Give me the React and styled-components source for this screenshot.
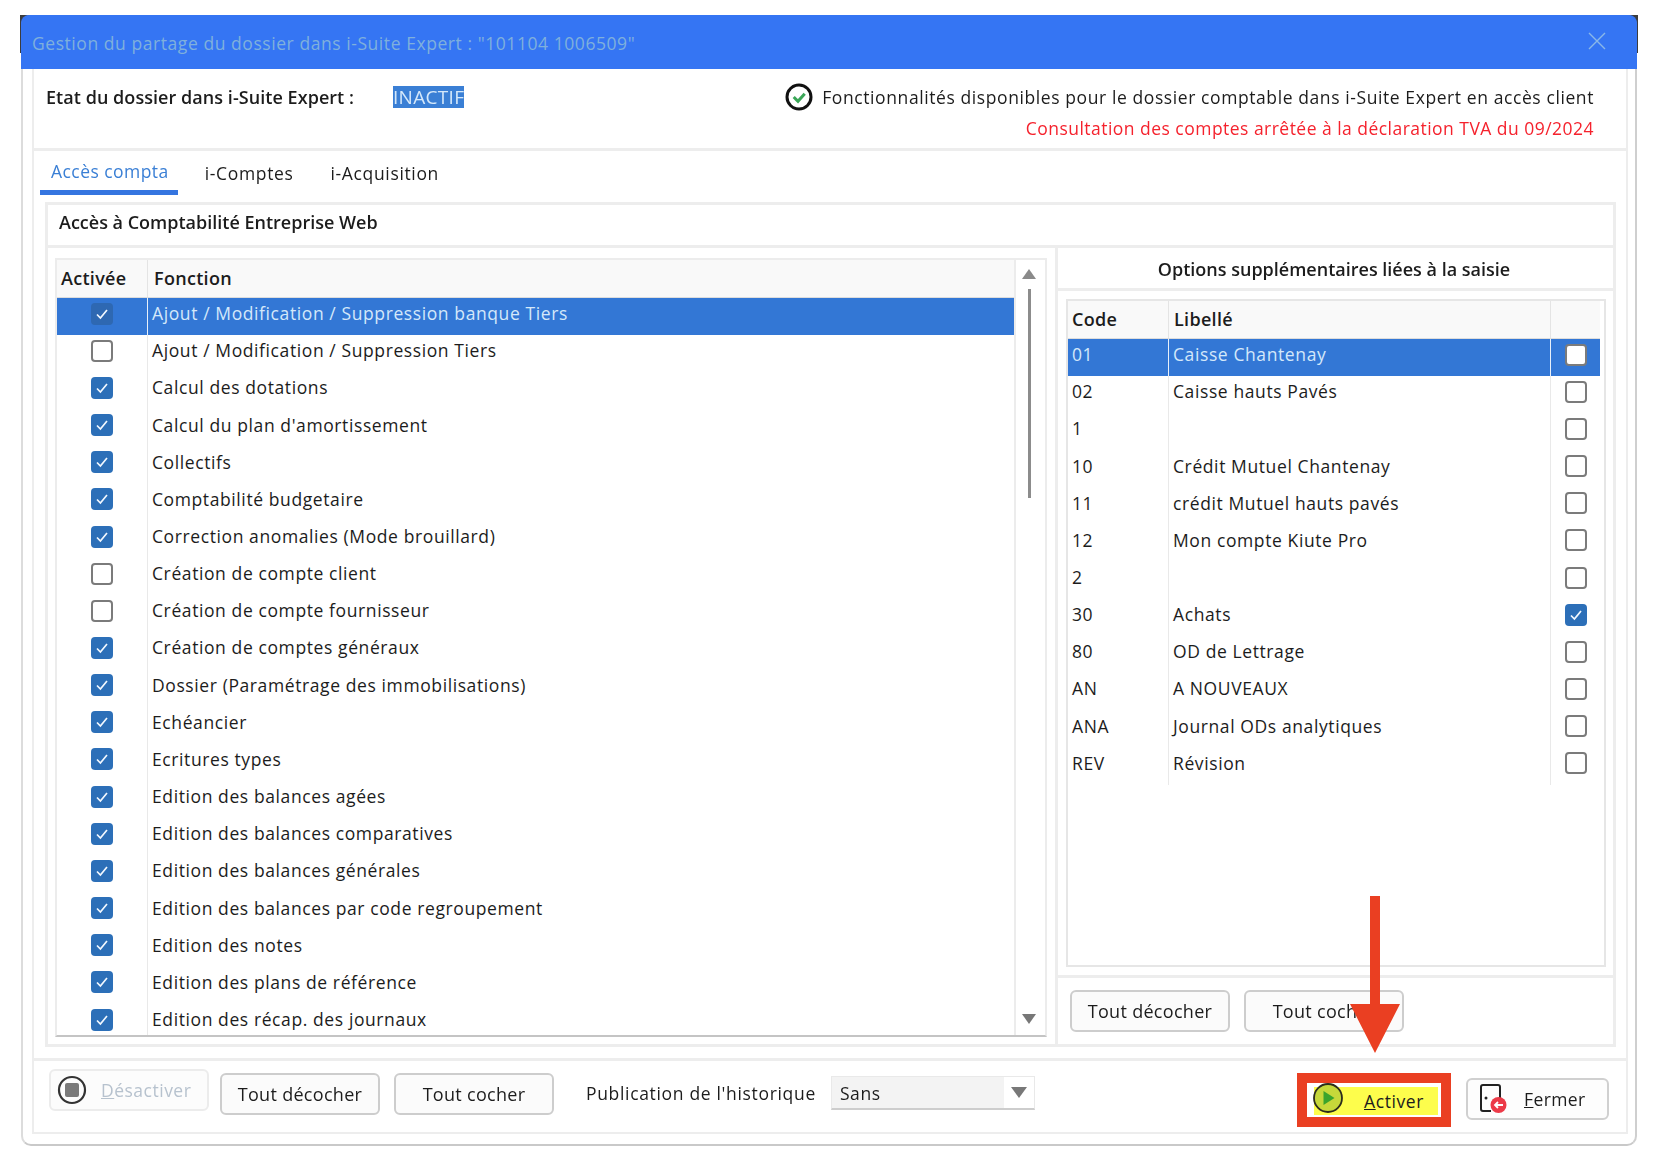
import React from "react";
import styled, { createGlobalStyle } from "styled-components";

const Global = createGlobalStyle`
  html, body { margin: 0; padding: 0; background: #fff; }
  body { font-family: "Open Sans", "Noto Sans", "Liberation Sans", sans-serif; color: #1c1c1c; }
  * { box-sizing: border-box; }
`;

const Page = styled.div`
  width: 1658px;
  height: 1164px;
  padding: 15px 21px 18px;
  overflow: hidden;
  filter: blur(0.3px);
`;

const Window = styled.div`
  position: relative;
  width: 1616px;
  height: 1131px;
  display: flex;
  flex-direction: column;
  border-left: 2px solid #dcdcdc;
  border-right: 2px solid #cfcfcf;
  border-bottom: 2px solid #c9c9c9;
  border-radius: 10px;
`;

const TitleBar = styled.div`
  flex: 0 0 54px;
  margin: 0 -2px;
  padding: 0 12px 0 11px;
  background: #3575f3;
  border-radius: 8px 8px 0 0;
  display: flex;
  align-items: center;
  justify-content: space-between;
`;

const TitleText = styled.span`
  font-size: 17.5px;
  letter-spacing: 0.56px;
  color: #7fb0dc;
  padding-top: 2px;
`;

const CloseIcon = styled.svg`
  width: 22px;
  height: 22px;
  margin-right: 17px;
  margin-top: -3px;
`;

const Inner = styled.div`
  flex: 1;
  min-height: 0;
  margin: 0 7px 10px 9px;
  display: flex;
  flex-direction: column;
  border-left: 2px solid #ededed;
  border-right: 2px solid #ededed;
  border-bottom: 2px solid #ededed;
`;

const StatusBar = styled.div`
  flex: 0 0 82px;
  border-bottom: 3px solid #ededed;
  display: flex;
  justify-content: space-between;
  padding: 14px 32px 0 12px;
`;

const StatusLeft = styled.div`
  display: flex;
  align-items: center;
  height: 28px;
`;

const StatusLabel = styled.span`
  font-size: 18px;
  font-weight: 600;
  width: 347px;
  letter-spacing: 0.05px;
`;

const SelectedWord = styled.span`
  background: #3a7fd5;
  color: #d4e8fa;
  font-size: 19px;
  line-height: 22px;
  letter-spacing: 0.3px;
`;

const StatusRight = styled.div`
  display: flex;
  flex-direction: column;
  align-items: flex-end;
`;

const StatusLine = styled.div`
  display: flex;
  align-items: center;
  gap: 9px;
  height: 28px;
  font-size: 17.5px;
  letter-spacing: 0.59px;
`;

const RedLine = styled(StatusLine)`
  color: #f5222d;
  margin-top: 3px;
  letter-spacing: 0.47px;
`;

const Tabs = styled.div`
  flex: 0 0 51px;
  display: flex;
  padding-left: 6px;
  align-items: flex-start;
`;

const Tab = styled.div`
  font-size: 17.5px;
  letter-spacing: ${p => (p.$active ? "0.45px" : "0.65px")};
  height: 44px;
  padding: ${p => (p.$active ? "8px 9px 0 11px" : "10px 0 0")};
  margin-right: ${p => (p.$active ? "27px" : "37px")};
  color: ${p => (p.$active ? "#3a7fd5" : "#1c1c1c")};
  border-bottom: ${p => (p.$active ? "5px solid #3575e0" : "none")};
`;

const Group = styled.div`
  flex: 0 0 845px;
  height: 845px;
  min-height: 0;
  margin: 0 10px 0 11px;
  border: 3px solid #ededed;
  display: flex;
  flex-direction: column;
`;

const GroupHeader = styled.div`
  flex: 0 0 43px;
  border-bottom: 3px solid #ededed;
  display: flex;
  align-items: center;
  padding: 0 0 7px 11px;
  font-size: 18px;
  font-weight: 600;
`;

const GroupBody = styled.div`
  flex: 1;
  min-height: 0;
  display: grid;
  grid-template-columns: 1010px 1fr;
  grid-template-rows: minmax(0, 1fr);
`;

const LeftPane = styled.div`
  padding: 10px 8px 7px 7px;
  min-height: 0;
  border-right: 3px solid #ededed;
  display: flex;
`;

const LeftTable = styled.div`
  flex: 1;
  min-height: 0;
  display: grid;
  grid-template-columns: 1fr 31px;
  grid-template-rows: minmax(0, 1fr);
  border: 2px solid #ececec;
  border-bottom-color: #c4c4c4;
  overflow: hidden;
`;

const TableMain = styled.div`
  display: flex;
  flex-direction: column;
  min-width: 0;
  min-height: 0;
  overflow: hidden;
`;

const HeadRow = styled.div`
  flex: 0 0 38px;
  display: grid;
  grid-template-columns: ${p => p.$cols};
  background: #f9f9f9;
  border-bottom: 1px solid #ddd;
`;

const HeadCell = styled.div`
  display: flex;
  align-items: center;
  padding: 0 0 2px ${p => p.$pl ?? 6}px;
  font-size: 18px;
  font-weight: 600;
  letter-spacing: 0.3px;
  border-right: ${p => (p.$noline ? "none" : "1px solid #e4e4e4")};
`;

const Row = styled.div`
  flex: 0 0 37.16px;
  display: grid;
  grid-template-columns: ${p => p.$cols};
  background: ${p => (p.$sel ? "#3377d5" : "#fff")};
  color: ${p => (p.$sel ? "#d4e8fa" : "#1c1c1c")};
`;

const Cell = styled.div`
  display: flex;
  align-items: center;
  padding: 0 0 7px ${p => p.$pl ?? 4}px;
  font-size: 17.5px;
  letter-spacing: 0.6px;
  white-space: nowrap;
  overflow: hidden;
  border-right: ${p => (p.$noline ? "none" : p.$sel ? "1px solid #e8f0fa" : "1px solid #e9e9e9")};
`;

const CheckCell = styled(Cell)`
  justify-content: center;
  padding: 0 0 6px;
`;

const CheckBox = styled.span`
  width: 22px;
  height: 22px;
  border-radius: 4px;
  display: flex;
  align-items: center;
  justify-content: center;
  background: ${p => (p.$checked ? (p.$sel ? "#2e68b2" : "#2c6fb8") : "#fff")};
  border: ${p => (p.$checked ? "none" : "2px solid #7b7b7b")};
`;

const ScrollTrack = styled.div`
  display: flex;
  flex-direction: column;
  align-items: center;
  padding: 9px 3px 0 0;
  border-left: 2px solid #ececec;
`;

const ScrollUp = styled.div`
  width: 0;
  height: 0;
  border-left: 7px solid transparent;
  border-right: 7px solid transparent;
  border-bottom: 10px solid #8a8a8a;
`;

const ScrollThumb = styled.div`
  width: 3px;
  height: 209px;
  margin-top: 10px;
  background: #8c8c8c;
`;

const ScrollDown = styled.div`
  width: 0;
  height: 0;
  margin-top: auto;
  margin-bottom: 11px;
  border-left: 7px solid transparent;
  border-right: 7px solid transparent;
  border-top: 10px solid #777;
`;

const RightPane = styled.div`
  display: flex;
  flex-direction: column;
  min-height: 0;
`;

const OptionsTitle = styled.div`
  flex: 0 0 43px;
  display: flex;
  align-items: center;
  justify-content: center;
  font-size: 18px;
  font-weight: 600;
  border-bottom: 3px solid #ededed;
  padding: 2px 3px 0 0;
`;

const OptionsBody = styled.div`
  flex: 0 0 687px;
  padding: 8px 7px 8px 8px;
  border-bottom: 3px solid #ededed;
  display: flex;
`;

const OptionsTable = styled.div`
  flex: 1;
  display: flex;
  flex-direction: column;
  padding-right: 4px;
  border: 2px solid #e6e6e6;
  overflow: hidden;
`;

const OptionsFoot = styled.div`
  flex: 1;
  display: flex;
  gap: 14px;
  padding: 12px 0 0 12px;
`;

const Btn = styled.button`
  width: ${p => p.$w}px;
  height: 42px;
  font: inherit;
  font-size: 18px;
  letter-spacing: 0.3px;
  color: #1c1c1c;
  background: #fbfbfb;
  border: 2px solid #cdcdcd;
  border-radius: 6px;
  padding: 0;
`;

const BottomBar = styled.div`
  flex: 1;
  margin-top: 11px;
  border-top: 3px solid #ededed;
  display: flex;
  align-items: flex-start;
  padding-left: 15px;
`;

const DisabledBtn = styled.div`
  width: 160px;
  height: 42px;
  margin-top: 8px;
  margin-right: 11px;
  display: flex;
  align-items: center;
  gap: 14px;
  padding-left: 6px;
  background: #fcfcfc;
  border: 2px solid #ececec;
  border-radius: 6px;
  color: #b7c2ce;
  font-size: 17.5px;
  letter-spacing: 0.5px;
`;

const Mnemonic = styled.span`
  text-decoration: underline;
`;

const BarBtn = styled(Btn)`
  margin-top: 12px;
  margin-right: 14px;
`;

const HistoryLabel = styled.span`
  margin: 20px 15px 0 18px;
  font-size: 17.5px;
  letter-spacing: 0.67px;
`;

const SelectBox = styled.div`
  width: 204px;
  height: 34px;
  margin-top: 15px;
  padding-left: 8px;
  display: flex;
  align-items: center;
  justify-content: space-between;
  background: #f3f3f3;
  border: 1px solid #e9e9e9;
  border-bottom: 2px solid #cdcdcd;
  font-size: 17.5px;
  letter-spacing: 0.6px;
`;

const ArrowZone = styled.span`
  width: 30px;
  height: 100%;
  background: #fff;
  display: flex;
  align-items: center;
  justify-content: center;
`;

const SelectArrow = styled.span`
  width: 0;
  height: 0;
  border-left: 8px solid transparent;
  border-right: 8px solid transparent;
  border-top: 11px solid #787878;
`;

const Highlight = styled.div`
  width: 154px;
  height: 54px;
  margin-top: 12px;
  margin-left: auto;
  margin-right: 15px;
  padding: 4px 3px 2px 7px;
  border: 10px solid #ea3f22;
  background: #fff;
  display: flex;
`;

const ActiveBtn = styled.div`
  flex: 1;
  background: #fdfd4c;
  display: flex;
  align-items: center;
  font-size: 17.5px;
  letter-spacing: 0.6px;
  position: relative;
  padding-left: 50px;
`;

const ActiveIcon = styled.svg`
  position: absolute;
  left: -1px;
  top: -4px;
  width: 30px;
  height: 30px;
`;

const CloseBtn = styled.div`
  width: 143px;
  height: 42px;
  margin-top: 17px;
  margin-right: 17px;
  display: flex;
  align-items: center;
  padding-left: 12px;
  gap: 16px;
  background: #fdfdfd;
  border: 2px solid #d0d0d0;
  border-radius: 6px;
  font-size: 17.5px;
  letter-spacing: 0.4px;
`;

const ArrowOverlay = styled.svg`
  position: absolute;
  left: 1326px;
  top: 881px;
  width: 52px;
  height: 158px;
  pointer-events: none;
`;

const CornerMark = styled.span`
  position: absolute;
  top: 0;
  z-index: -1;
  ${p => (p.$right ? "right: -3px;" : "left: -3px;")}
  width: 2px;
  height: 38px;
  background: #3c3c3c;
  &::after {
    content: "";
    position: absolute;
    top: 0;
    ${p => (p.$right ? "right: 0;" : "left: 0;")}
    width: 9px;
    height: 9px;
    background: #3c3c3c;
  }
`;

const check = (
  <svg width="14" height="12" viewBox="0 0 14 12" fill="none">
    <path d="M2 6.5 L5.4 10 L12 2" stroke="#f2f8ff" strokeWidth="1.7" />
  </svg>
);

const left = [
  ["Ajout / Modification / Suppression banque Tiers", 1],
  ["Ajout / Modification / Suppression Tiers", 0],
  ["Calcul des dotations", 1],
  ["Calcul du plan d'amortissement", 1],
  ["Collectifs", 1],
  ["Comptabilité budgetaire", 1],
  ["Correction anomalies (Mode brouillard)", 1],
  ["Création de compte client", 0],
  ["Création de compte fournisseur", 0],
  ["Création de comptes généraux", 1],
  ["Dossier (Paramétrage des immobilisations)", 1],
  ["Echéancier", 1],
  ["Ecritures types", 1],
  ["Edition des balances agées", 1],
  ["Edition des balances comparatives", 1],
  ["Edition des balances générales", 1],
  ["Edition des balances par code regroupement", 1],
  ["Edition des notes", 1],
  ["Edition des plans de référence", 1],
  ["Edition des récap. des journaux", 1],
];

const right = [
  ["01", "Caisse Chantenay", 0],
  ["02", "Caisse hauts Pavés", 0],
  ["1", "", 0],
  ["10", "Crédit Mutuel Chantenay", 0],
  ["11", "crédit Mutuel hauts pavés", 0],
  ["12", "Mon compte Kiute Pro", 0],
  ["2", "", 0],
  ["30", "Achats", 1],
  ["80", "OD de Lettrage", 0],
  ["AN", "A NOUVEAUX", 0],
  ["ANA", "Journal ODs analytiques", 0],
  ["REV", "Révision", 0],
];

const leftCols = "91px 1fr";
const rightCols = "101px 382px 1fr";

export default function App() {
  return (
    <Page>
      <Global />
      <Window>
        <CornerMark />
        <CornerMark $right />
        <TitleBar>
          <TitleText>Gestion du partage du dossier dans i-Suite Expert : "101104 1006509"</TitleText>
          <CloseIcon viewBox="0 0 22 22" fill="none">
            <path d="M3 3 L19 19 M19 3 L3 19" stroke="#8ab8e8" strokeWidth="1.4" />
          </CloseIcon>
        </TitleBar>
        <Inner>
          <StatusBar>
            <StatusLeft>
              <StatusLabel>Etat du dossier dans i-Suite Expert :</StatusLabel>
              <SelectedWord>INACTIF</SelectedWord>
            </StatusLeft>
            <StatusRight>
              <StatusLine>
                <svg width="28" height="28" viewBox="0 0 28 28" fill="none">
                  <circle cx="14" cy="14" r="12" stroke="#111" strokeWidth="3" />
                  <path d="M8.7 14 L13 18.3 L19.7 10.7" stroke="#3aa657" strokeWidth="3" />
                </svg>
                Fonctionnalités disponibles pour le dossier comptable dans i-Suite Expert en accès client
              </StatusLine>
              <RedLine>Consultation des comptes arrêtée à la déclaration TVA du 09/2024</RedLine>
            </StatusRight>
          </StatusBar>
          <Tabs>
            <Tab $active>Accès compta</Tab>
            <Tab>i-Comptes</Tab>
            <Tab>i-Acquisition</Tab>
          </Tabs>
          <Group>
            <GroupHeader>Accès à Comptabilité Entreprise Web</GroupHeader>
            <GroupBody>
              <LeftPane>
                <LeftTable>
                  <TableMain>
                    <HeadRow $cols={leftCols}>
                      <HeadCell $pl={4}>Activée</HeadCell>
                      <HeadCell $noline $pl={6}>Fonction</HeadCell>
                    </HeadRow>
                    {left.map(([label, on], i) => (
                      <Row key={label} $cols={leftCols} $sel={i === 0}>
                        <CheckCell $sel={i === 0}>
                          <CheckBox $checked={!!on} $sel={i === 0}>{on ? check : null}</CheckBox>
                        </CheckCell>
                        <Cell $noline>{label}</Cell>
                      </Row>
                    ))}
                  </TableMain>
                  <ScrollTrack>
                    <ScrollUp />
                    <ScrollThumb />
                    <ScrollDown />
                  </ScrollTrack>
                </LeftTable>
              </LeftPane>
              <RightPane>
                <OptionsTitle>Options supplémentaires liées à la saisie</OptionsTitle>
                <OptionsBody>
                  <OptionsTable>
                    <HeadRow $cols={rightCols}>
                      <HeadCell $pl={4}>Code</HeadCell>
                      <HeadCell $pl={5}>Libellé</HeadCell>
                      <HeadCell $noline />
                    </HeadRow>
                    {right.map(([code, label, on], i) => (
                      <Row key={code} $cols={rightCols} $sel={i === 0}>
                        <Cell $pl={4} $sel={i === 0}>{code}</Cell>
                        <Cell $pl={4} $sel={i === 0}>{label}</Cell>
                        <CheckCell $noline $sel={i === 0}>
                          <CheckBox $checked={!!on}>{on ? check : null}</CheckBox>
                        </CheckCell>
                      </Row>
                    ))}
                  </OptionsTable>
                </OptionsBody>
                <OptionsFoot>
                  <Btn $w={160}>Tout décocher</Btn>
                  <Btn $w={160}>Tout cocher</Btn>
                </OptionsFoot>
              </RightPane>
            </GroupBody>
          </Group>
          <BottomBar>
            <DisabledBtn>
              <svg width="30" height="30" viewBox="0 0 30 30" fill="none">
                <circle cx="15" cy="15" r="13" stroke="#333" strokeWidth="2.2" />
                <rect x="8" y="8" width="14" height="14" rx="2" fill="#7a7a7a" />
              </svg>
              <span><Mnemonic>D</Mnemonic>ésactiver</span>
            </DisabledBtn>
            <BarBtn $w={160}>Tout décocher</BarBtn>
            <BarBtn $w={160}>Tout cocher</BarBtn>
            <HistoryLabel>Publication de l'historique</HistoryLabel>
            <SelectBox>
              Sans
              <ArrowZone><SelectArrow /></ArrowZone>
            </SelectBox>
            <Highlight>
              <ActiveBtn>
                <ActiveIcon viewBox="0 0 30 30" fill="none">
                  <circle cx="15" cy="15" r="14" fill="#c6d83a" stroke="#2c2c1c" strokeWidth="1.8" />
                  <path d="M10.5 8 L21.5 15 L10.5 22 Z" fill="#3aa42c" />
                </ActiveIcon>
                <span><Mnemonic>A</Mnemonic>ctiver</span>
              </ActiveBtn>
            </Highlight>
            <CloseBtn>
              <svg width="28" height="30" viewBox="0 0 28 30" fill="none">
                <path d="M20 14 V3 a2 2 0 0 0 -2 -2 H3 a2 2 0 0 0 -2 2 V25 a2 2 0 0 0 2 2 H11" stroke="#222" strokeWidth="2" />
                <circle cx="6" cy="14" r="1.5" fill="#222" />
                <circle cx="18.5" cy="21" r="8" fill="#ec3a48" />
                <path d="M23 21 H15 M18 18 L15 21 L18 24" stroke="#fff" strokeWidth="1.8" />
              </svg>
              <span><Mnemonic>F</Mnemonic>ermer</span>
            </CloseBtn>
          </BottomBar>
        </Inner>
        <ArrowOverlay viewBox="0 0 52 158">
          <path d="M21 0 H31 V108 H51 L26 157 L1 108 H21 Z" fill="#ea3f22" />
        </ArrowOverlay>
      </Window>
    </Page>
  );
}
